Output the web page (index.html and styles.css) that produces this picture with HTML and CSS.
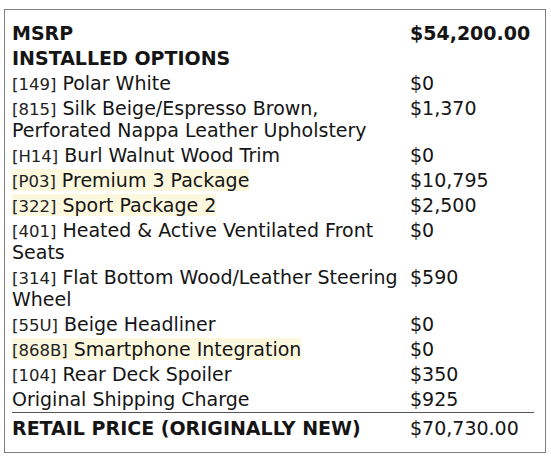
FILE: index.html
```html
<!DOCTYPE html>
<html>
<head>
<meta charset="utf-8">
<link rel="stylesheet" href="styles.css">
</head>
<body>
<div class="sticker">
  <div class="row head"><div class="label">MSRP</div><div class="price">$54,200.00</div></div>
  <div class="row head"><div class="label">INSTALLED OPTIONS</div><div class="price"></div></div>
  <div class="row"><div class="label"><span class="code">[149]</span> Polar White</div><div class="price">$0</div></div>
  <div class="row"><div class="label"><span class="code">[815]</span> Silk Beige/Espresso Brown, Perforated Nappa Leather Upholstery</div><div class="price">$1,370</div></div>
  <div class="row"><div class="label"><span class="code">[H14]</span> Burl Walnut Wood Trim</div><div class="price">$0</div></div>
  <div class="row"><div class="label"><span class="hl"><span class="code">[P03]</span> Premium 3 Package</span></div><div class="price">$10,795</div></div>
  <div class="row"><div class="label"><span class="hl"><span class="code">[322]</span> Sport Package 2</span></div><div class="price">$2,500</div></div>
  <div class="row"><div class="label"><span class="code">[401]</span> Heated &amp; Active Ventilated Front Seats</div><div class="price">$0</div></div>
  <div class="row"><div class="label"><span class="code">[314]</span> Flat Bottom Wood/Leather Steering Wheel</div><div class="price">$590</div></div>
  <div class="row"><div class="label"><span class="code">[55U]</span> Beige Headliner</div><div class="price">$0</div></div>
  <div class="row"><div class="label"><span class="hl"><span class="code">[868B]</span> Smartphone Integration</span></div><div class="price">$0</div></div>
  <div class="row"><div class="label"><span class="code">[104]</span> Rear Deck Spoiler</div><div class="price">$350</div></div>
  <div class="row"><div class="label">Original Shipping Charge</div><div class="price">$925</div></div>
  <div class="row total"><div class="label">RETAIL PRICE (ORIGINALLY NEW)</div><div class="price">$70,730.00</div></div>
</div>
</body>
</html>
```
FILE: styles.css
```css
html, body {
  margin: 0;
  padding: 0;
  background: #ffffff;
}
body {
  font-family: "DejaVu Sans", Verdana, sans-serif;
  font-size: 19px;
  color: #151515;
}
.sticker {
  box-sizing: border-box;
  margin: 9px 0 0 4px;
  width: 542px;
  border: 1px solid #808080;
  padding: 10px 11px 11px 7px;
}
.row {
  display: grid;
  grid-template-columns: 398px 1fr;
  line-height: 22px;
  padding: 1.5px 0;
}
.label {
  padding-right: 8px;
}
.head {
  font-weight: bold;
}
.code {
  font-size: 16.5px;
  line-height: 1;
  color: #222;
}
.hl {
  background: #fcf8de;
}
.total {
  border-top: 1px solid #555;
  margin-top: 1px;
  padding-top: 4px;
}
.total .label {
  font-weight: bold;
}
```
